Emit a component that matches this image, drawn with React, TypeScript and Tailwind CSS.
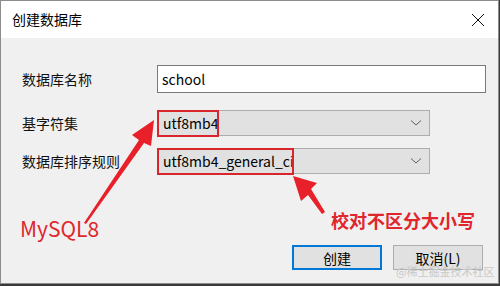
const FONT = '"Noto Sans CJK SC", "Noto Sans", sans-serif';

function Chevron() {
  return (
    <svg width="12" height="8" viewBox="0 0 12 8" className="shrink-0">
      <path d="M1 1.5 L6 6 L11 1.5" fill="none" stroke="#606060" strokeWidth="1" />
    </svg>
  );
}

function Select({ value, boxW }: { value: string; boxW: number }) {
  return (
    <div className="relative w-[273px] h-[26px] bg-[#e1e1e1] border border-[#adadad] flex items-center justify-between pl-[5px] pr-[7px]">
      <span className="text-[14px] text-black leading-none">{value}</span>
      <Chevron />
      <div
        className="absolute -left-[1px] -top-[1px] h-[27px] border-2 border-[#d9262c]"
        style={{ width: boxW }}
      />
    </div>
  );
}

export default function App() {
  return (
    <div
      className="relative w-[500px] h-[286px] overflow-hidden bg-[#3a3a3a]"
      style={{ fontFamily: FONT }}
    >
      <div className="w-[499px] h-[284px] border border-[#8c8c8c] bg-[#f0f0f0] flex flex-col">
        <div className="h-[37px] bg-white flex items-center justify-between pl-[11px] pr-[13px]">
          <span className="text-[14px] text-black">创建数据库</span>
          <svg width="14" height="14" viewBox="0 0 14 14">
            <path d="M1 1 L13 13 M13 1 L1 13" stroke="#111" strokeWidth="1" />
          </svg>
        </div>

        <div className="flex flex-col pl-[21px] pt-[27px]">
          <div className="flex items-center h-[28px]">
            <span className="w-[135px] text-[14px] text-[#111]">数据库名称</span>
            <div className="w-[329px] h-[28px] bg-white border border-[#7a7a7a] flex items-center pl-[4px]">
              <span className="text-[14px] text-black leading-none">school</span>
            </div>
          </div>

          <div className="flex items-center h-[26px] mt-[17px]">
            <span className="w-[135px] text-[14px] text-[#111]">基字符集</span>
            <Select value="utf8mb4" boxW={62} />
          </div>

          <div className="flex items-center h-[26px] mt-[12px]">
            <span className="w-[135px] text-[14px] text-[#111]">数据库排序规则</span>
            <Select value="utf8mb4_general_ci" boxW={137} />
          </div>
        </div>

        <div className="flex justify-end gap-[11px] pr-[15px] mt-auto mb-[13px]">
          <button className="w-[90px] h-[25px] bg-[#e1e1e1] border-2 border-[#0078d7] text-[14px] text-black leading-none">
            创建
          </button>
          <button className="w-[90px] h-[25px] bg-[#e1e1e1] border border-[#adadad] text-[14px] text-black leading-none">
            取消(L)
          </button>
        </div>
      </div>

      {/* annotations */}
      <svg className="absolute left-0 top-0" width="500" height="286" viewBox="0 0 500 286">
        <path d="M84 223 L139 140 L132 135 L154 120 L151 146 L144 143 L86 224 Z" fill="#e8202a" />
        <path d="M322 214 L308 195 L301 201 L293 176 L317 183 L311 189 L325 212 Z" fill="#e8202a" />
      </svg>
      <span className="absolute left-[20px] top-[218px] text-[21px] leading-none text-[#e0262d]">
        MySQL8
      </span>
      <span className="absolute left-[331px] top-[211px] text-[18px] leading-none font-bold text-[#e0262d]">
        校对不区分大小写
      </span>
      <span className="absolute left-[396px] top-[266px] whitespace-nowrap text-[11px] leading-none text-[#c8c8c8]">
        @稀土掘金技术社区
      </span>
    </div>
  );
}
